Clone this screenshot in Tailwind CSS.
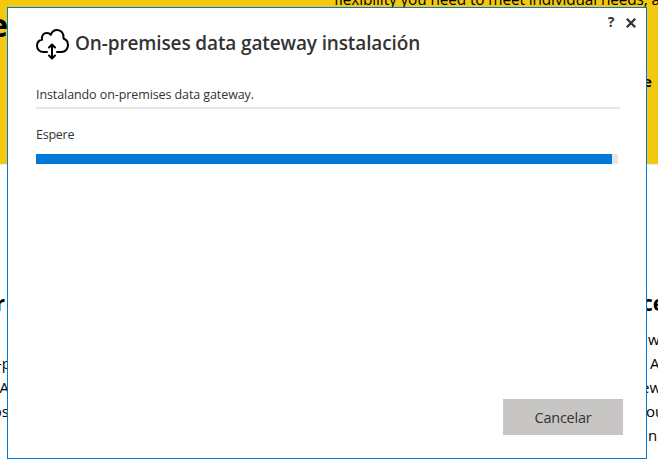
<!DOCTYPE html>
<html lang="es">
<head>
<meta charset="utf-8">
<title>On-premises data gateway</title>
<script src="https://cdn.jsdelivr.net/npm/@tailwindcss/browser@4"></script>
</head>
<body class="w-[658px] h-[473px] overflow-hidden bg-white font-['Open_Sans','Noto_Sans',sans-serif] text-black">
<!-- Page behind the installer -->
<div class="relative w-[658px] h-[473px] overflow-hidden">
  <section class="h-[165px] bg-[#f2c811] border-b border-[#eeeeee] flex justify-between overflow-hidden">
    <h1 class="w-[8px] h-[60px] flex justify-end text-[33px] leading-[50px] font-bold">e</h1>
    <div class="w-[324px] h-[163px] overflow-hidden">
      <p class="-mt-[12px] text-[15.4px] leading-6 whitespace-nowrap tracking-[-0.12px]">flexibility you need to meet individual needs, and</p>
      <p class="mt-[57px] pl-[309px] text-[15px] leading-6 font-bold">e</p>
    </div>
  </section>
  <section class="flex justify-between pt-[122px]">
    <div class="w-[8px] flex flex-col items-end whitespace-nowrap text-[15px] leading-6">
      <h2 class="text-[21px] leading-[32px] font-bold mr-[3px]">r</h2>
      <p class="mt-[32px] mr-[-3px]">-p</p>
      <p class="mr-[-1px]">A</p>
      <p class="mr-[-1px]">os</p>
    </div>
    <div class="w-[19px] whitespace-nowrap text-[15px] leading-6">
      <h2 class="pl-[3px] text-[21px] leading-[32px] font-bold">ce</h2>
      <p class="mt-2 pl-[9px]">w</p>
      <p class="pl-[11px]">A</p>
      <p class="pl-[2px]">ew</p>
      <p class="pl-[7px]">ou</p>
      <p class="pl-[9px]">n</p>
    </div>
  </section>

  <!-- Installer dialog -->
  <main class="absolute left-[7px] top-[7px] w-[640px] h-[452px] bg-white border border-[#0078d7] flex flex-col text-[#333333]">
    <div class="h-[16px] mt-[7px] pr-[9px] flex justify-end gap-[9px] items-center">
      <button class="-mt-[2px] -translate-x-px text-[14px] leading-4 font-bold w-[8px]">?</button>
      <button aria-label="Cerrar" class="w-[12px] h-[12px]"><svg width="12" height="12" viewBox="0 0 12 12" fill="none" stroke="#333" stroke-width="2.3"><path d="M1.8 1.8 10.2 10.2M10.2 1.8 1.8 10.2"/></svg></button>
    </div>
    <header class="h-[40px] pl-[28px] flex">
      <svg class="mt-[-3px] shrink-0" width="33" height="32" viewBox="0 0 33 32" fill="none" stroke="#000" stroke-width="2" stroke-linecap="round" stroke-linejoin="round">
        <path d="M11 24H7.500C3.800 24 1 21.300 1 17.800c0-3.200 2-5.600 5-6.100C5.200 7.500 7.600 5 10.800 5c1.700 0 3.200.7 4 1.800C16 3.700 18.300 2 21 2c4.300 0 7.200 3.400 6.500 8.500C30.500 11.600 32 14.200 32 17c0 4-2.800 7-6.500 7h-4.500"/>
        <path d="M16 17v13M13 19.500l3-3 3 3M13 27.500l3 3 3-3"/>
      </svg>
      <h1 class="ml-[6px] mt-[-2px] text-[19px] leading-[28px] font-semibold whitespace-nowrap tracking-[-0.13px]">On-premises data gateway instalación</h1>
    </header>
    <section class="px-[28px] flex flex-col">
      <p class="mt-[14px] h-[22px] text-[12.500px] leading-[20px] tracking-[-0.09px]">Instalando on-premises data gateway.</p>
      <div class="w-[584px] h-[2px] bg-[#e6e6e6]"></div>
      <p class="mt-[16px] text-[12.500px] leading-[20px] tracking-[-0.25px]">Espere</p>
      <div class="mt-[9px] w-[582px] h-[10px] bg-[#e6e6e6]"><div class="h-full bg-[#0078d7]" style="width:576px"></div></div>
    </section>
    <footer class="mt-auto mb-[23px] pr-[23px] flex justify-end">
      <button class="w-[120px] h-[36px] pt-[2px] bg-[#c8c6c4] text-[14.500px] tracking-[-0.25px]">Cancelar</button>
    </footer>
  </main>
</div>
</body>
</html>
